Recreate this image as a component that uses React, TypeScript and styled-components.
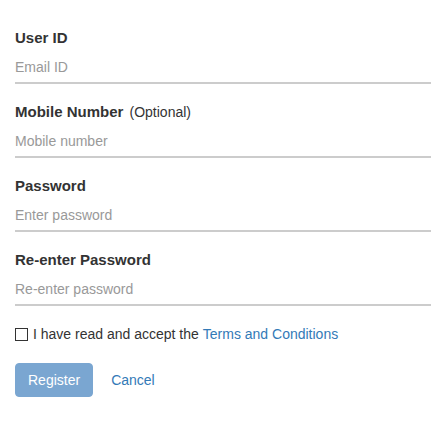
import React from "react";
import styled, { createGlobalStyle } from "styled-components";

const GlobalStyle = createGlobalStyle`
  html, body {
    margin: 0;
    padding: 0;
    background: #ffffff;
  }
  body {
    font-family: "Liberation Sans", Arial, Helvetica, sans-serif;
    color: #333333;
    font-size: 14px;
    line-height: 20px;
  }
  * { box-sizing: border-box; }
`;

const Form = styled.form`
  display: flex;
  flex-direction: column;
  padding: 28px 15px 0;
`;

const Field = styled.div`
  display: flex;
  flex-direction: column;
  margin-bottom: 18px;
`;

const Label = styled.label`
  font-size: 15px;
  font-weight: bold;
  line-height: 20px;
  color: #333333;
`;

const Hint = styled.span`
  font-size: 14px;
  font-weight: normal;
  margin-left: 2px;
`;

const Input = styled.input`
  display: block;
  width: 100%;
  margin-top: 1px;
  height: 35px;
  padding: 8px 0 5px;
  border: none;
  border-bottom: 2px solid #cccccc;
  border-radius: 0;
  outline: none;
  background: transparent;
  font-family: inherit;
  font-size: 14px;
  line-height: 20px;
  color: #333333;
  &::placeholder {
    color: #999999;
  }
`;

const TermsRow = styled.label`
  display: flex;
  align-items: center;
  height: 20px;
  font-size: 14px;
  color: #333333;
`;

const Check = styled.input`
  appearance: none;
  width: 13px;
  height: 13px;
  margin: 0 5px 0 0;
  border: 1px solid #333333;
  border-radius: 0;
  background: #ffffff;
`;

const Link = styled.a`
  color: #337ab7;
  text-decoration: none;
  margin-left: 4px;
`;

const Actions = styled.div`
  display: flex;
  align-items: center;
  gap: 5px;
  margin-top: 19px;
`;

const Button = styled.button<{ $variant?: "primary" | "link" }>`
  font-family: inherit;
  font-size: 14px;
  line-height: 20px;
  padding: 6px 12px;
  border-radius: 4px;
  cursor: pointer;
  border: 1px solid
    ${(p) => (p.$variant === "link" ? "transparent" : "#7aa6d1")};
  background: ${(p) => (p.$variant === "link" ? "transparent" : "#7aa6d1")};
  color: ${(p) => (p.$variant === "link" ? "#337ab7" : "#ffffff")};
`;

export default function App() {
  return (
    <>
      <GlobalStyle />
      <Form onSubmit={(e) => e.preventDefault()}>
        <Field>
          <Label htmlFor="uid">User ID</Label>
          <Input id="uid" placeholder="Email ID" />
        </Field>
        <Field>
          <Label htmlFor="mob">
            Mobile Number <Hint>(Optional)</Hint>
          </Label>
          <Input id="mob" placeholder="Mobile number" />
        </Field>
        <Field>
          <Label htmlFor="pw">Password</Label>
          <Input id="pw" type="password" placeholder="Enter password" />
        </Field>
        <Field>
          <Label htmlFor="pw2">Re-enter Password</Label>
          <Input id="pw2" type="password" placeholder="Re-enter password" />
        </Field>
        <TermsRow>
          <Check type="checkbox" />
          I have read and accept the
          <Link href="#">Terms and Conditions</Link>
        </TermsRow>
        <Actions>
          <Button type="submit" $variant="primary">Register</Button>
          <Button type="button" $variant="link">Cancel</Button>
        </Actions>
      </Form>
    </>
  );
}
